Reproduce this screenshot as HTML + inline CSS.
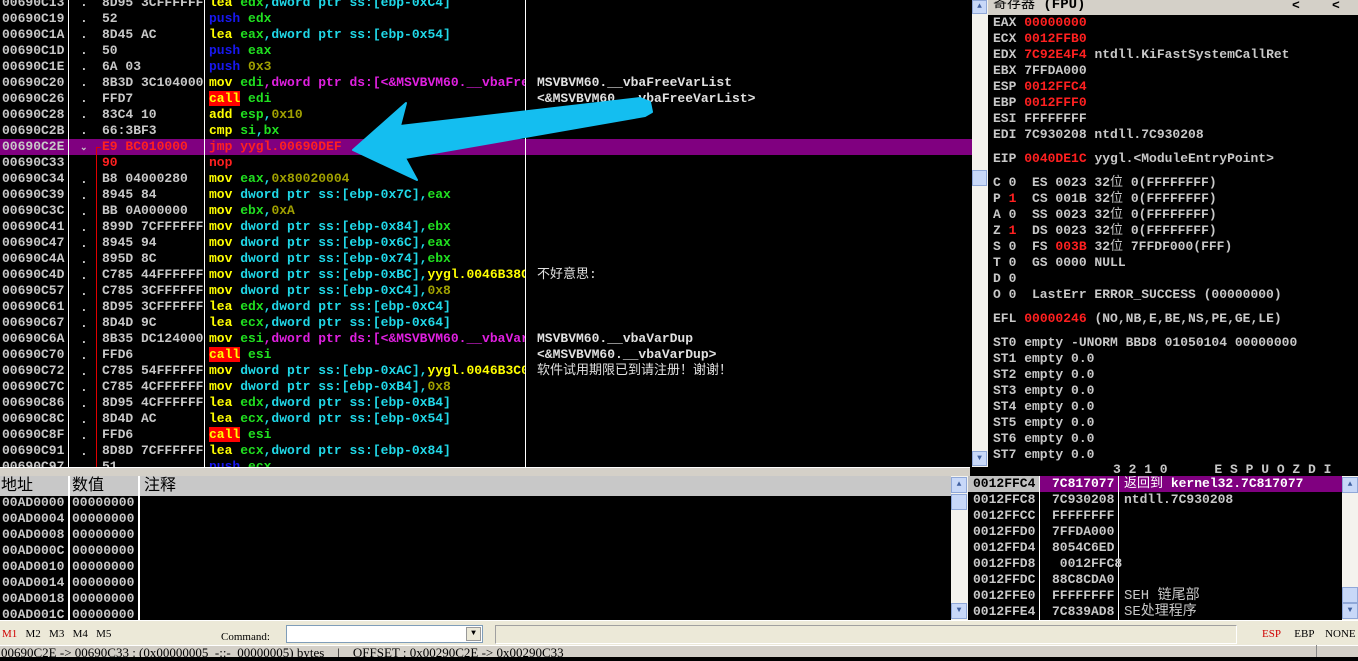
<!DOCTYPE html>
<html><head><meta charset="utf-8"><style>
*{margin:0;padding:0;box-sizing:border-box}
body{width:1358px;height:657px;overflow:hidden;background:#000;position:relative;font-family:"Liberation Mono","WenQuanYi Zen Hei",monospace;font-size:13px;font-weight:bold;color:#c8c8c8}
.a{position:absolute;white-space:pre;line-height:16px;height:16px}
.clip{position:absolute;overflow:hidden}
.y{color:#ffff00}.b{color:#1818f0}.g{color:#20e020}.c{color:#20d8e8}.o{color:#a0a000}.m{color:#e020e0}.r{color:#ff2020}.w{color:#e0e0e0}
.call{background:#ff0000;color:#ffff00}
.vl{position:absolute;width:1px;background:#fff}
.gray{position:absolute;background:#d4d0c8}
.cn{font-family:"Liberation Mono","WenQuanYi Zen Hei",monospace;font-weight:normal}
</style></head><body>

<!-- disasm pane -->
<div class="clip" style="left:0;top:0;width:972px;height:467px">
<div style="position:absolute;left:0;top:139px;width:972px;height:16px;background:#800080"></div>
<div class="vl" style="left:68px;top:0;height:467px"></div>
<div class="vl" style="left:204px;top:0;height:467px"></div>
<div class="vl" style="left:525px;top:0;height:467px"></div>
<div style="position:absolute;left:96px;top:148px;width:1px;height:320px;background:#e00000"></div>
<div style="position:absolute;left:96px;top:147px;width:5px;height:1px;background:#e00000"></div>
<div class="a" style="left:2px;top:-5px">00690C13<br>00690C19<br>00690C1A<br>00690C1D<br>00690C1E<br>00690C20<br>00690C26<br>00690C28<br>00690C2B<br>00690C2E<br>00690C33<br>00690C34<br>00690C39<br>00690C3C<br>00690C41<br>00690C47<br>00690C4A<br>00690C4D<br>00690C57<br>00690C61<br>00690C67<br>00690C6A<br>00690C70<br>00690C72<br>00690C7C<br>00690C86<br>00690C8C<br>00690C8F<br>00690C91<br>00690C97</div>
<div class="a" style="left:80px;top:-5px;height:auto">.<br>.<br>.<br>.<br>.<br>.<br>.<br>.<br>.<br><span style="font-size:9px">⌄</span><br> <br>.<br>.<br>.<br>.<br>.<br>.<br>.<br>.<br>.<br>.<br>.<br>.<br>.<br>.<br>.<br>.<br>.<br>.<br>.</div>
<div class="clip" style="left:102px;top:-5px;width:102px;height:480px"><div class="a" style="left:0;top:0;height:auto">8D95 3CFFFFFF<br>52<br>8D45 AC<br>50<br>6A 03<br>8B3D 3C104000<br>FFD7<br>83C4 10<br>66:3BF3<br><span class="r">E9 BC010000</span><br><span class="r">90</span><br>B8 04000280<br>8945 84<br>BB 0A000000<br>899D 7CFFFFFF<br>8945 94<br>895D 8C<br>C785 44FFFFFF<br>C785 3CFFFFFF<br>8D95 3CFFFFFF<br>8D4D 9C<br>8B35 DC124000<br>FFD6<br>C785 54FFFFFF<br>C785 4CFFFFFF<br>8D95 4CFFFFFF<br>8D4D AC<br>FFD6<br>8D8D 7CFFFFFF<br>51</div></div>
<div class="clip" style="left:209px;top:-5px;width:316px;height:480px"><div class="a" style="left:0;top:0;height:auto"><span class="y">lea</span> <span class="g">edx</span><span class="c">,dword ptr ss:[ebp-0xC4]</span>
<span class="b">push</span> <span class="g">edx</span>
<span class="y">lea</span> <span class="g">eax</span><span class="c">,dword ptr ss:[ebp-0x54]</span>
<span class="b">push</span> <span class="g">eax</span>
<span class="b">push</span> <span class="o">0x3</span>
<span class="y">mov</span> <span class="g">edi</span><span class="m">,dword ptr ds:[&lt;&amp;MSVBVM60.__vbaFreeVarList&gt;]</span>
<span class="call">call</span> <span class="g">edi</span>
<span class="y">add</span> <span class="g">esp</span><span class="c">,</span><span class="o">0x10</span>
<span class="y">cmp</span> <span class="g">si</span><span class="c">,</span><span class="g">bx</span>
<span class="r">jmp yygl.00690DEF</span>
<span class="r">nop</span>
<span class="y">mov</span> <span class="g">eax</span><span class="c">,</span><span class="o">0x80020004</span>
<span class="y">mov</span> <span class="c">dword ptr ss:[ebp-0x7C],</span><span class="g">eax</span>
<span class="y">mov</span> <span class="g">ebx</span><span class="c">,</span><span class="o">0xA</span>
<span class="y">mov</span> <span class="c">dword ptr ss:[ebp-0x84],</span><span class="g">ebx</span>
<span class="y">mov</span> <span class="c">dword ptr ss:[ebp-0x6C],</span><span class="g">eax</span>
<span class="y">mov</span> <span class="c">dword ptr ss:[ebp-0x74],</span><span class="g">ebx</span>
<span class="y">mov</span> <span class="c">dword ptr ss:[ebp-0xBC],</span><span class="y">yygl.0046B38C</span>
<span class="y">mov</span> <span class="c">dword ptr ss:[ebp-0xC4],</span><span class="o">0x8</span>
<span class="y">lea</span> <span class="g">edx</span><span class="c">,dword ptr ss:[ebp-0xC4]</span>
<span class="y">lea</span> <span class="g">ecx</span><span class="c">,dword ptr ss:[ebp-0x64]</span>
<span class="y">mov</span> <span class="g">esi</span><span class="m">,dword ptr ds:[&lt;&amp;MSVBVM60.__vbaVarDup&gt;]</span>
<span class="call">call</span> <span class="g">esi</span>
<span class="y">mov</span> <span class="c">dword ptr ss:[ebp-0xAC],</span><span class="y">yygl.0046B3C0</span>
<span class="y">mov</span> <span class="c">dword ptr ss:[ebp-0xB4],</span><span class="o">0x8</span>
<span class="y">lea</span> <span class="g">edx</span><span class="c">,dword ptr ss:[ebp-0xB4]</span>
<span class="y">lea</span> <span class="g">ecx</span><span class="c">,dword ptr ss:[ebp-0x54]</span>
<span class="call">call</span> <span class="g">esi</span>
<span class="y">lea</span> <span class="g">ecx</span><span class="c">,dword ptr ss:[ebp-0x84]</span>
<span class="b">push</span> <span class="g">ecx</span></div></div>
<div class="a w" style="left:537px;top:75px">MSVBVM60.__vbaFreeVarList</div>
<div class="a w" style="left:537px;top:91px">&lt;&amp;MSVBVM60.__vbaFreeVarList&gt;</div>
<div class="a w cn" style="left:537px;top:267px">不好意思:</div>
<div class="a w" style="left:537px;top:331px">MSVBVM60.__vbaVarDup</div>
<div class="a w" style="left:537px;top:347px">&lt;&amp;MSVBVM60.__vbaVarDup&gt;</div>
<div class="a w cn" style="left:537px;top:363px">软件试用期限已到请注册！谢谢！</div>
</div>
<svg style="position:absolute;left:0;top:0" width="972" height="467"><polygon points="353,150 406,103 400,126 640,98 650,102 652,112 645,116 405,158 417,180" fill="#14bef0" stroke="#14bef0" stroke-width="2" stroke-linejoin="round"/></svg>

<!-- disasm scrollbar -->
<div style="position:absolute;left:972px;top:0;width:16px;height:467px;background:#f4f3ee"></div>
<div style="position:absolute;left:972px;top:0;width:15px;height:14px;background:#c8d8f8;border:1px solid #90a8d8;font-size:8px;color:#4060a0;text-align:center;line-height:12px">▲</div>
<div style="position:absolute;left:972px;top:170px;width:15px;height:16px;background:#c8d8f8;border:1px solid #90a8d8"></div>
<div style="position:absolute;left:972px;top:451px;width:15px;height:15px;background:#c8d8f8;border:1px solid #90a8d8;font-size:8px;color:#4060a0;text-align:center;line-height:13px">▼</div>

<!-- register pane -->
<div class="gray" style="left:988px;top:0;width:370px;height:15px;background:#d4d0c8"></div>
<div class="a cn" style="left:993px;top:-3px;color:#000;font-size:14px">寄存器 <b style="font-family:'Liberation Mono'">(FPU)</b></div>
<div class="a" style="left:1292px;top:-2px;color:#000">&lt;</div>
<div class="a" style="left:1332px;top:-2px;color:#000">&lt;</div>
<div class="a" style="left:993px;top:15px;height:auto">EAX <span class="r">00000000</span>
ECX <span class="r">0012FFB0</span>
EDX <span class="r">7C92E4F4</span> ntdll.KiFastSystemCallRet
EBX 7FFDA000
ESP <span class="r">0012FFC4</span>
EBP <span class="r">0012FFF0</span>
ESI FFFFFFFF
EDI 7C930208 ntdll.7C930208</div>
<div class="a" style="left:993px;top:151px">EIP <span class="r">0040DE1C</span> yygl.&lt;ModuleEntryPoint&gt;</div>
<div class="a" style="left:993px;top:175px;height:auto">C 0  ES 0023 32<span class="cn">位</span> 0(FFFFFFFF)
P <span class="r">1</span>  CS 001B 32<span class="cn">位</span> 0(FFFFFFFF)
A 0  SS 0023 32<span class="cn">位</span> 0(FFFFFFFF)
Z <span class="r">1</span>  DS 0023 32<span class="cn">位</span> 0(FFFFFFFF)
S 0  FS <span class="r">003B</span> 32<span class="cn">位</span> 7FFDF000(FFF)
T 0  GS 0000 NULL
D 0
O 0  LastErr ERROR_SUCCESS (00000000)</div>
<div class="a" style="left:993px;top:311px">EFL <span class="r">00000246</span> (NO,NB,E,BE,NS,PE,GE,LE)</div>
<div class="a" style="left:993px;top:335px;height:auto">ST0 empty -UNORM BBD8 01050104 00000000
ST1 empty 0.0
ST2 empty 0.0
ST3 empty 0.0
ST4 empty 0.0
ST5 empty 0.0
ST6 empty 0.0
ST7 empty 0.0</div>
<div class="a" style="left:1113px;top:462px">3 2 1 0      E S P U O Z D I</div>

<!-- divider -->
<div class="gray" style="left:0;top:467px;width:970px;height:9px;background:#d4d0c8;border-top:1px solid #fff"></div>
<div class="gray" style="left:940px;top:473px;width:30px;height:3px"></div>

<!-- dump pane -->
<div class="gray" style="left:0;top:476px;width:951px;height:20px;background:#c8c8c8"></div>
<div class="a cn" style="left:1px;top:477px;color:#000;font-size:16px;line-height:18px">地址</div>
<div class="a cn" style="left:72px;top:477px;color:#000;font-size:16px;line-height:18px">数值</div>
<div class="a cn" style="left:144px;top:477px;color:#000;font-size:16px;line-height:18px">注释</div>
<div style="position:absolute;left:68px;top:476px;width:2px;height:144px;background:#fff"></div>
<div style="position:absolute;left:138px;top:476px;width:2px;height:144px;background:#fff"></div>
<div class="a" style="left:2px;top:495px;height:auto">00AD0000<br>00AD0004<br>00AD0008<br>00AD000C<br>00AD0010<br>00AD0014<br>00AD0018<br>00AD001C</div>
<div class="a" style="left:72px;top:495px;height:auto">00000000<br>00000000<br>00000000<br>00000000<br>00000000<br>00000000<br>00000000<br>00000000</div>
<div style="position:absolute;left:951px;top:476px;width:17px;height:144px;background:#f4f3ee"></div>
<div style="position:absolute;left:951px;top:477px;width:16px;height:16px;background:#c8d8f8;border:1px solid #90a8d8;font-size:8px;color:#4060a0;text-align:center;line-height:14px">▲</div>
<div style="position:absolute;left:951px;top:494px;width:16px;height:16px;background:#c8d8f8;border:1px solid #90a8d8"></div>
<div style="position:absolute;left:951px;top:603px;width:16px;height:16px;background:#c8d8f8;border:1px solid #90a8d8;font-size:8px;color:#4060a0;text-align:center;line-height:14px">▼</div>

<!-- stack pane -->
<div style="position:absolute;left:968px;top:476px;width:72px;height:16px;background:#c0c0c0"></div>
<div style="position:absolute;left:1040px;top:476px;width:302px;height:16px;background:#800080"></div>
<div style="position:absolute;left:1039px;top:476px;width:1px;height:144px;background:#fff"></div>
<div style="position:absolute;left:1118px;top:476px;width:1px;height:144px;background:#fff"></div>
<div class="a" style="left:973px;top:476px;height:auto"><span style="color:#000">0012FFC4</span>
0012FFC8
0012FFCC
0012FFD0
0012FFD4
0012FFD8
0012FFDC
0012FFE0
0012FFE4</div>
<div class="a" style="left:1052px;top:476px;height:auto"><span style="color:#fff">7C817077</span>
7C930208
FFFFFFFF
7FFDA000
8054C6ED
 0012FFC8
88C8CDA0
FFFFFFFF
7C839AD8</div>
<div class="a" style="left:1124px;top:476px;height:auto"><span style="color:#fff"><span class="cn">返回到</span> kernel32.7C817077</span>
ntdll.7C930208






</div>
<div class="a cn" style="left:1124px;top:588px;font-size:14px">SEH 链尾部</div>
<div class="a cn" style="left:1124px;top:604px;font-size:14px">SE处理程序</div>
<div style="position:absolute;left:1342px;top:476px;width:16px;height:144px;background:#f4f3ee"></div>
<div style="position:absolute;left:1342px;top:477px;width:16px;height:16px;background:#c8d8f8;border:1px solid #90a8d8;font-size:8px;color:#4060a0;text-align:center;line-height:14px">▲</div>
<div style="position:absolute;left:1342px;top:587px;width:16px;height:16px;background:#c8d8f8;border:1px solid #90a8d8"></div>
<div style="position:absolute;left:1342px;top:603px;width:16px;height:16px;background:#c8d8f8;border:1px solid #90a8d8;font-size:8px;color:#4060a0;text-align:center;line-height:14px">▼</div>

<!-- bottom toolbar -->
<div style="position:absolute;left:0;top:620px;width:1358px;height:26px;background:#ece9d8;border-top:1px solid #fff"></div>
<div class="a" style="left:2px;top:626px;font-family:'Liberation Serif',serif;font-weight:normal;font-size:11px;color:#000"><span style="color:#d00000">M1</span>   M2   M3   M4   M5</div>
<div class="a" style="left:221px;top:629px;font-family:'Liberation Serif',serif;font-weight:normal;font-size:11px;color:#000">Command:</div>
<div style="position:absolute;left:286px;top:625px;width:197px;height:18px;background:#fff;border:1px solid #7f9db9"></div>
<div style="position:absolute;left:466px;top:627px;width:15px;height:14px;background:#ece9d8;border:1px solid #999;font-size:8px;text-align:center;line-height:12px;color:#000">▼</div>
<div style="position:absolute;left:495px;top:625px;width:742px;height:19px;border:1px solid #a0a0a0;border-right-color:#fff;border-bottom-color:#fff"></div>
<div class="a" style="left:1262px;top:626px;font-family:'Liberation Serif',serif;font-weight:normal;font-size:11px;color:#000"><span style="color:#d00000">ESP</span>     EBP    NONE</div>
<!-- status bar -->
<div style="position:absolute;left:0;top:645px;width:1358px;height:12px;background:#d4d0c8;border-top:1px solid #fff"></div>
<div class="a" style="left:1px;top:645px;font-family:'Liberation Serif',serif;font-weight:normal;font-size:13px;color:#000">00690C2E -&gt; 00690C33 : (0x00000005  -::-  00000005) bytes    |    OFFSET : 0x00290C2E -&gt; 0x00290C33</div>
<div style="position:absolute;left:1316px;top:645px;width:1px;height:12px;background:#888"></div>
</body></html>
